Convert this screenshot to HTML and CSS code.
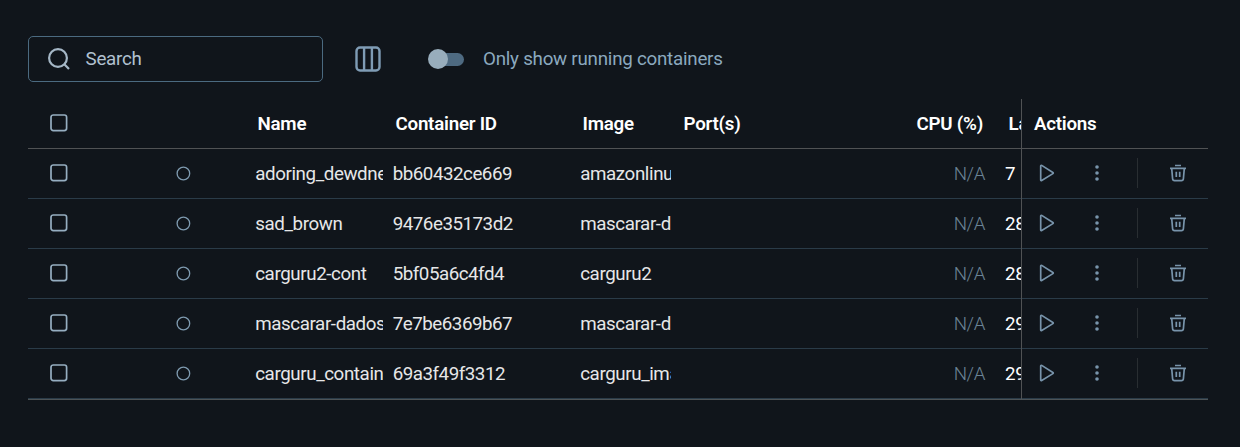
FILE: index.html
```html
<!DOCTYPE html>
<html lang="en">
<head>
<meta charset="utf-8">
<title>Containers</title>
<link rel="stylesheet" href="styles.css">
</head>
<body>
<svg class="sprite" aria-hidden="true">
  <symbol id="box" viewBox="0 0 20 20"><rect x="2" y="2" width="15.600" height="15.600" rx="2.300" fill="none" stroke="currentColor" stroke-width="1.700"/></symbol>
  <symbol id="ring" viewBox="0 0 16 16"><circle cx="8.400" cy="8.500" r="6.300" fill="none" stroke="currentColor" stroke-width="1.300"/></symbol>
  <symbol id="play" viewBox="0 0 20 20"><path d="M3.700 3v14c0 .6.5.9 1 .6l11.200-7c.5-.3.5-.9 0-1.200L4.700 2.400c-.5-.3-1 0-1 .6z" fill="none" stroke="currentColor" stroke-width="1.700"/></symbol>
  <symbol id="more" viewBox="0 0 20 20"><g fill="currentColor"><circle cx="10" cy="4" r="1.800"/><circle cx="10" cy="10" r="1.800"/><circle cx="10" cy="16" r="1.800"/></g></symbol>
  <symbol id="trash" viewBox="0 0 20 20"><path d="M7 2.500h6M2 5.400h16M3.700 5.400l.9 10.400c.1 1.200.8 1.800 2 1.800h6.800c1.200 0 1.900-.6 2-1.800L16.300 5.400M8.300 8.700v5.400M11.700 8.700v5.400" fill="none" stroke="currentColor" stroke-width="1.700"/></symbol>
</svg>
<main class="page">
  <div class="toolbar">
    <label class="search">
      <svg class="search-icon" viewBox="0 0 24 24"><circle cx="11" cy="11" r="8.900"/><path d="M17.300 17.300l4.700 4.700"/></svg>
      <span>Search</span>
    </label>
    <svg class="columns-icon" viewBox="0 0 26 26"><rect x="1.500" y="1.500" width="23" height="23" rx="3.500"/><path d="M9.100 2v22M16.900 2v22"/></svg>
    <span class="switch"><span class="knob"></span></span>
    <span class="switch-label">Only show running containers</span>
  </div>
  <div class="table">
    <div class="row head">
      <div class="check"><svg><use href="#box"/></svg></div><div></div>
      <div class="cell">Name</div><div class="cell">Container ID</div><div class="cell">Image</div><div class="cell">Port(s)</div><div class="cell num">CPU (%)</div><div class="cell">Last</div>
      <div class="actions">Actions</div>
    </div>
    <div class="row">
      <div class="check"><svg><use href="#box"/></svg></div><div class="status"><svg><use href="#ring"/></svg></div>
      <div class="cell">adoring_dewdney</div><div class="cell id">bb60432ce669</div><div class="cell image">amazonlinux</div><div class="cell"></div><div class="cell num">N/A</div><div class="cell last">7 days ago</div>
      <div class="actions"><svg><use href="#play"/></svg><svg><use href="#more"/></svg><i class="divider"></i><svg><use href="#trash"/></svg></div>
    </div>
    <div class="row">
      <div class="check"><svg><use href="#box"/></svg></div><div class="status"><svg><use href="#ring"/></svg></div>
      <div class="cell">sad_brown</div><div class="cell id">9476e35173d2</div><div class="cell image">mascarar-dados</div><div class="cell"></div><div class="cell num">N/A</div><div class="cell last">28 days ago</div>
      <div class="actions"><svg><use href="#play"/></svg><svg><use href="#more"/></svg><i class="divider"></i><svg><use href="#trash"/></svg></div>
    </div>
    <div class="row">
      <div class="check"><svg><use href="#box"/></svg></div><div class="status"><svg><use href="#ring"/></svg></div>
      <div class="cell">carguru2-cont</div><div class="cell id">5bf05a6c4fd4</div><div class="cell image">carguru2</div><div class="cell"></div><div class="cell num">N/A</div><div class="cell last">28 days ago</div>
      <div class="actions"><svg><use href="#play"/></svg><svg><use href="#more"/></svg><i class="divider"></i><svg><use href="#trash"/></svg></div>
    </div>
    <div class="row">
      <div class="check"><svg><use href="#box"/></svg></div><div class="status"><svg><use href="#ring"/></svg></div>
      <div class="cell">mascarar-dados</div><div class="cell id">7e7be6369b67</div><div class="cell image">mascarar-dados</div><div class="cell"></div><div class="cell num">N/A</div><div class="cell last">29 days ago</div>
      <div class="actions"><svg><use href="#play"/></svg><svg><use href="#more"/></svg><i class="divider"></i><svg><use href="#trash"/></svg></div>
    </div>
    <div class="row">
      <div class="check"><svg><use href="#box"/></svg></div><div class="status"><svg><use href="#ring"/></svg></div>
      <div class="cell">carguru_container</div><div class="cell id">69a3f49f3312</div><div class="cell image">carguru_image</div><div class="cell"></div><div class="cell num">N/A</div><div class="cell last">29 days ago</div>
      <div class="actions"><svg><use href="#play"/></svg><svg><use href="#more"/></svg><i class="divider"></i><svg><use href="#trash"/></svg></div>
    </div>
  </div>
</main>
</body>
</html>
```
FILE: styles.css
```css
* { box-sizing: border-box; }
body {
  margin: 0;
  background: #10151b;
  color: #e6e7e8;
  font-family: Roboto, "Liberation Sans", sans-serif;
  font-size: 18.75px;
}
.sprite { display: none; }
.page { height: 447px; padding: 36px 32px 0 28px; overflow: hidden; }
.toolbar { display: flex; align-items: center; height: 46px; margin-bottom: 17px; }
.search {
  display: flex;
  align-items: center;
  gap: 15px;
  width: 295px;
  height: 46px;
  padding-left: 17.500px;
  border: 1px solid #4b6a80;
  border-radius: 5px;
  color: #b1c1d0;
  letter-spacing: -0.24px;
}
.search-icon { width: 24px; height: 24px; fill: none; stroke: #a5b7c6; stroke-width: 2.200; }
.columns-icon { width: 26px; height: 26px; margin-left: 32px; fill: none; stroke: #7f9cb5; stroke-width: 2.400; }
.switch {
  display: flex;
  align-items: center;
  width: 34px;
  height: 13px;
  margin-left: 49px;
  border-radius: 7px;
  background: #4e6a81;
}
.knob { flex: none; width: 20px; height: 20px; margin-left: -2px; border-radius: 50%; background: #98adbc; }
.switch-label { margin-left: 19px; color: #8ba9bf; letter-spacing: -0.240px; }
.table { border-bottom: 1px solid #4d5356; }
.row {
  display: grid;
  grid-template-columns: 62px 155px 138px 187px 101px 189px 136px 25px 187px;
  height: 50px;
  border-bottom: 1px solid #2a3b48;
}
.head { border-color: #505254; color: #fff; font-weight: 600; }
.cell {
  height: 49px;
  padding-left: 10.200px;
  line-height: 51px;
  letter-spacing: -0.400px;
  white-space: nowrap;
  overflow: hidden;
}
.id { padding-left: 9.700px; letter-spacing: -0.480px; }
.image { letter-spacing: -0.400px; }
.num { padding-right: 11px; text-align: right; color: #6b8395; font-weight: 300; }
.last { padding-left: 9px; color: #fff; word-spacing: 2px; }
.head .cell { padding-left: 12.500px; letter-spacing: -0.240px; }
.head .num { padding-right: 13px; color: #fff; font-weight: 600; }
.check { height: 49px; padding: 14px 0 0 21px; color: #96aec1; }
.check svg { display: block; width: 20px; height: 20px; }
.status { height: 49px; padding: 16px 0 0 85px; color: #7f9bb0; }
.status svg { display: block; width: 16px; height: 16px; }
.actions {
  display: flex;
  align-items: center;
  height: 50px;
  padding: 0 0 2px 15px;
  border-left: 1px solid #505254;
  color: #7894ab;
}
.actions svg { flex: none; width: 20px; height: 20px; }
.actions svg + svg { margin-left: 30px; }
.divider { width: 1px; height: 30px; margin: 0 30px 0 30px; background: #292e32; }
.head .actions { height: 49px; padding: 0 0 0 12px; color: #fff; letter-spacing: -0.240px; }
```
